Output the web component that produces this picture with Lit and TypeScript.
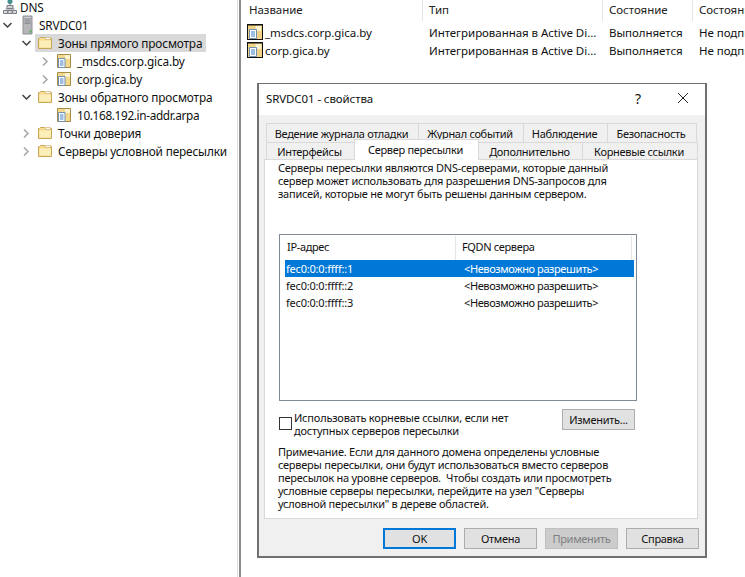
import { LitElement, html, css } from "lit";
import { customElement } from "lit/decorators.js";

const folder = html`<svg class="ico" width="16" height="16" viewBox="0 0 16 16"><path d="M1.500 13.500V3.500h1l1-1h4l1 1h6v10z" fill="#f6dc8e" stroke="#c9a656"/><path d="M2.500 12.500V5.500h11.500v7z" fill="#fbeeb9"/><path d="M8.500 2.500h5v2h-5z" fill="#fff" stroke="#c9a656" stroke-width=".6"/></svg>`;
const zone = html`<svg class="ico" width="16" height="16" viewBox="0 0 16 16"><path d="M1.500 14.500V1.500h13v13z" fill="#f2d98c" stroke="#a88c45"/><path d="M9 2h5v4H9z" fill="#fbf3cf"/><path d="M2.500 5.500h6.500v9h-6.500z" fill="#fff" stroke="#6f8fb4"/><path d="M4 8h3.500M4 10h3.500M4 12h3.500" stroke="#3f7fc4" stroke-width="1"/></svg>`;
const zoneDark = html`<svg class="ico" width="18" height="18" viewBox="0 0 18 18"><path d="M1 1h16v16H1z" fill="#111"/><path d="M2 2.500h14v13.500H2z" fill="#efd283"/><path d="M9.500 3h5.500v5H9.500z" fill="#fbf3cf"/><path d="M3.500 6.500h7v9h-7z" fill="#fff" stroke="#6f8fb4"/><path d="M5 9h4M5 11h4M5 13h4" stroke="#3f7fc4"/></svg>`;
const server = html`<svg class="ico" width="16" height="20" viewBox="0 0 16 20"><path d="M3 1h9v18H3z" fill="#b4b6b8" stroke="#8d9093"/><path d="M4.500 3h6M4.500 5h6M4.500 7h6" stroke="#eef0f2"/><path d="M4.500 4h6M4.500 6h6M4.500 8h6" stroke="#6d7073"/><path d="M9.500 15.500h2v2h-2z" fill="#4fb04a"/></svg>`;
const dns = html`<svg class="ico" width="16" height="16" viewBox="0 0 16 16"><circle cx="8" cy="2.500" r="2.500" fill="#3f8f8c"/><path d="M8 4v4" stroke="#777"/><path d="M5 6.500h6v3H5z" fill="#cfd2d6" stroke="#7b7f85"/><path d="M1.500 11.500h4v3h-4zM6 11.500h4v3H6zM10.500 11.500h4v3h-4z" fill="#d9dbde" stroke="#7b7f85"/><path d="M3.500 10h9" stroke="#7b7f85"/></svg>`;
const down = html`<svg class="chev" width="9" height="7" viewBox="0 0 9 7"><path d="M.5 1l4 4 4-4" fill="none" stroke="#404040" stroke-width="1.500"/></svg>`;
const right = html`<svg class="chev" width="7" height="9" viewBox="0 0 7 9"><path d="M1 .5l4 4-4 4" fill="none" stroke="#a6a6a6" stroke-width="1.500"/></svg>`;

type Node = { label: string; depth: number; chev?: "d" | "r"; icon: unknown; sel?: boolean; num?: boolean };
const tree: Node[] = [
  { label: "DNS", depth: 0, icon: dns },
  { label: "SRVDC01", depth: 1, chev: "d", icon: server },
  { label: "Зоны прямого просмотра", depth: 2, chev: "d", icon: folder, sel: true },
  { label: "_msdcs.corp.gica.by", depth: 3, chev: "r", icon: zone },
  { label: "corp.gica.by", depth: 3, chev: "r", icon: zone },
  { label: "Зоны обратного просмотра", depth: 2, chev: "d", icon: folder },
  { label: "10.168.192.in-addr.arpa", depth: 3, icon: zone, num: true },
  { label: "Точки доверия", depth: 2, chev: "r", icon: folder },
  { label: "Серверы условной пересылки", depth: 2, chev: "r", icon: folder },
];

const tabs1 = [
  { t: "Ведение журнала отладки", w: 152 },
  { t: "Журнал событий", w: 105 },
  { t: "Наблюдение", w: 84 },
  { t: "Безопасность", w: 89 },
];
const tabs2 = [
  { t: "Интерфейсы", w: 88 },
  { t: "Сервер пересылки", w: 124, active: true },
  { t: "Дополнительно", w: 104 },
  { t: "Корневые ссылки", w: 115 },
];

@customElement("app-root")
export class AppRoot extends LitElement {
  static styles = css`
    :host { display: block; position: relative; width: 745px; height: 577px; overflow: hidden; background: #fff;
      font-family: "Noto Sans", sans-serif; font-size: 11.500px; color: #111; }
    .shell { display: flex; height: 577px; }
    .treepane { width: 237px; flex: none; overflow: hidden; font-size: 11.800px; letter-spacing: -0.15px; }
    .split { box-sizing: border-box; width: 4px; flex: none; border-left: 1px solid #dcdcdc; border-right: 2px solid #8c8c8c; }
    .treelist { margin-top: -2px; }
    .row { display: flex; align-items: center; height: 18px; white-space: nowrap; }
    .slot { width: 12px; flex: none; display: flex; justify-content: center; align-items: center; margin-left: -1px; margin-right: 5px; }
    .node { display: flex; align-items: center; height: 18px; padding-right: 4px; gap: 5px; margin-left: -2px; padding-left: 2px; }
    .node.sel { background: #d9d9d9; }
    .num { letter-spacing: -0.35px; }
    .d0 { padding-left: 2px; margin-top: -1px; } .d0 .slot { display: none; }
    .d1 { padding-left: 2px; } .d2 { padding-left: 21px; } .d3 { padding-left: 40px; }
    .d0 .node { gap: 2px; margin: 0; padding: 0; }
    .d1 .node { gap: 3px; margin-left: -1px; padding-left: 3px; }
    .d3 .node { margin-left: -1px; padding-left: 1px; }
    .ico, .chev { display: block; flex: none; }
    .list { flex: 1; min-width: 0; overflow: hidden; letter-spacing: -0.05px; }
    .cols, .lrow { display: grid; grid-template-columns: 182px 180px 90px 70px; white-space: nowrap; }
    .cols { height: 21px; align-items: center; margin-bottom: 2px; }
    .cols div { height: 21px; line-height: 20px; padding-left: 6px; border-right: 1px solid #e5e5e5; box-sizing: border-box; overflow: hidden; color: #222; }
    .cols div:first-child { padding-left: 8px; }
    .lrow { height: 18px; align-items: center; }
    .lrow > div { padding-left: 6px; overflow: hidden; }
    .lrow > .first { display: flex; align-items: center; padding-left: 5px; gap: 1px; }
    .dialog { position: absolute; left: 257px; top: 83px; width: 450px; height: 475px; box-sizing: border-box;
      border: 1px solid #707070; border-width: 1px 2px 2px 2px; background: #f0f0f0; display: flex; flex-direction: column; font-size: 11px; letter-spacing: -0.3px; }
    .title { box-sizing: border-box; height: 31px; flex: none; background: #fff; display: flex; align-items: center; padding: 0 0 3px 7px; font-size: 11.500px; letter-spacing: -0.1px; }
    .title span { flex: 1; }
    .help { width: 11px; margin-right: 31px; font-size: 14px; }
    .close { margin-right: 16px; display: block; }
    .tabs { padding: 8px 8px 0 7px; flex: none; position: relative; }
    .trow { display: flex; height: 19px; }
    .trow + .trow { height: 17px; }
    .tab { box-sizing: border-box; border: 1px solid #d9d9d9; border-bottom: none; text-align: center; line-height: 20px; white-space: nowrap; background: #f0f0f0; margin-right: -1px; overflow: hidden; padding-right: 2px; }
    .trow + .trow .tab { line-height: 17px; }
    .tab.active { background: #fff; position: relative; z-index: 2; height: 21px; margin-top: -3px; line-height: 19px !important; }
    .panel { box-sizing: border-box; height: 360px; margin: 0 7px 0 5px; flex: none; background: #fff; border: 1px solid #d9d9d9; padding: 1px 13px 0 13px; line-height: 13px; }
    .panel p { margin: 0; white-space: nowrap; letter-spacing: -0.25px; }
    .table { box-sizing: border-box; width: 358px; height: 167px; margin-top: 34px; margin-left: 1px; border: 1px solid #7f8a95; padding-top: 1px; }
    .thead { display: grid; grid-template-columns: 176px 176px; height: 24px; align-items: center; letter-spacing: -0.35px; }
    .thead div { height: 24px; line-height: 22px; padding-left: 7px; border-right: 1px solid #e5e5e5; box-sizing: border-box; }
    .thead div + div { padding-left: 6px; }
    .trw { display: grid; grid-template-columns: 173px 175px; height: 17px; line-height: 17px; margin: 0 2px 0 5px; white-space: nowrap; letter-spacing: -0.2px; }
    .trw div { padding-left: 1px; }
    .trw div + div { padding-left: 6px; letter-spacing: -0.4px; }
    .trw.sel { background: #0078d7; color: #fff; }
    .opts { display: flex; margin-top: 8px; align-items: flex-start; padding-left: 1px; }
    .check { box-sizing: border-box; width: 13px; height: 13px; border: 1px solid #333; background: #fff; margin-top: 8px; flex: none; }
    .optlabel { margin-left: 2px; margin-top: 2px; width: 268px; flex: none; white-space: nowrap; letter-spacing: -0.2px; }
    .btn { box-sizing: border-box; width: 73px; height: 21px; background: #e1e1e1; border: 1px solid #adadad; text-align: center; line-height: 20px; flex: none; white-space: nowrap; }
    .panel p.note { margin-top: 8px; }
    .foot { display: flex; justify-content: flex-end; gap: 8px; padding: 9px 6px 0 0; flex: none; }
    .ok { border: 2px solid #0078d7; line-height: 18px; }
    .dis { background: #cccccc; color: #7f7f7f; border-color: #bfbfbf; }
  `;

  private node(n: Node) {
    return html`<div class="row d${n.depth}">
      <div class="slot">${n.chev === "d" ? down : n.chev === "r" ? right : ""}</div>
      <div class="node ${n.sel ? "sel" : ""}">${n.icon}<span class="${n.num ? "num" : ""}">${n.label}</span></div>
    </div>`;
  }

  private tabRow(list: { t: string; w: number; active?: boolean }[]) {
    return html`<div class="trow">${list.map(
      (x) => html`<div class="tab ${x.active ? "active" : ""}" style="width:${x.w + 1}px">${x.t}</div>`
    )}</div>`;
  }

  render() {
    const rows = ["fec0:0:0:ffff::1", "fec0:0:0:ffff::2", "fec0:0:0:ffff::3"];
    return html`
      <div class="shell">
        <div class="treepane"><div class="treelist">${tree.map((n) => this.node(n))}</div></div>
        <div class="split"></div>
        <div class="list">
          <div class="cols"><div>Название</div><div>Тип</div><div>Состояние</div><div>Состояние</div></div>
          ${["_msdcs.corp.gica.by", "corp.gica.by"].map(
            (z) => html`<div class="lrow">
              <div class="first">${zoneDark}<span>${z}</span></div>
              <div>Интегрированная в Active Di...</div><div>Выполняется</div><div>Не подписано</div>
            </div>`
          )}
        </div>
      </div>
      <div class="dialog">
        <div class="title"><span>SRVDC01 - свойства</span><div class="help">?</div>
          <svg class="close" width="12" height="12" viewBox="0 0 12 12"><path d="M1 1l10 10M11 1L1 11" stroke="#222" fill="none"/></svg>
        </div>
        <div class="tabs">${this.tabRow(tabs1)}${this.tabRow(tabs2)}</div>
        <div class="panel">
          <p>Серверы пересылки являются DNS-серверами, которые данный<br>сервер может использовать для разрешения DNS-запросов для<br>записей, которые не могут быть решены данным сервером.</p>
          <div class="table">
            <div class="thead"><div>IP-адрес</div><div>FQDN сервера</div></div>
            ${rows.map((r, i) => html`<div class="trw ${i === 0 ? "sel" : ""}"><div>${r}</div><div>&lt;Невозможно разрешить&gt;</div></div>`)}
          </div>
          <div class="opts">
            <div class="check"></div>
            <div class="optlabel">Использовать корневые ссылки, если нет<br>доступных серверов пересылки</div>
            <div class="btn">Изменить...</div>
          </div>
          <p class="note">Примечание. Если для данного домена определены условные<br>серверы пересылки, они будут использоваться вместо серверов<br>пересылок на уровне серверов.&nbsp; Чтобы создать или просмотреть<br>условные серверы пересылки, перейдите на узел "Серверы<br>условной пересылки" в дереве областей.</p>
        </div>
        <div class="foot">
          <div class="btn ok">OK</div><div class="btn">Отмена</div><div class="btn dis">Применить</div><div class="btn">Справка</div>
        </div>
      </div>
    `;
  }
}
